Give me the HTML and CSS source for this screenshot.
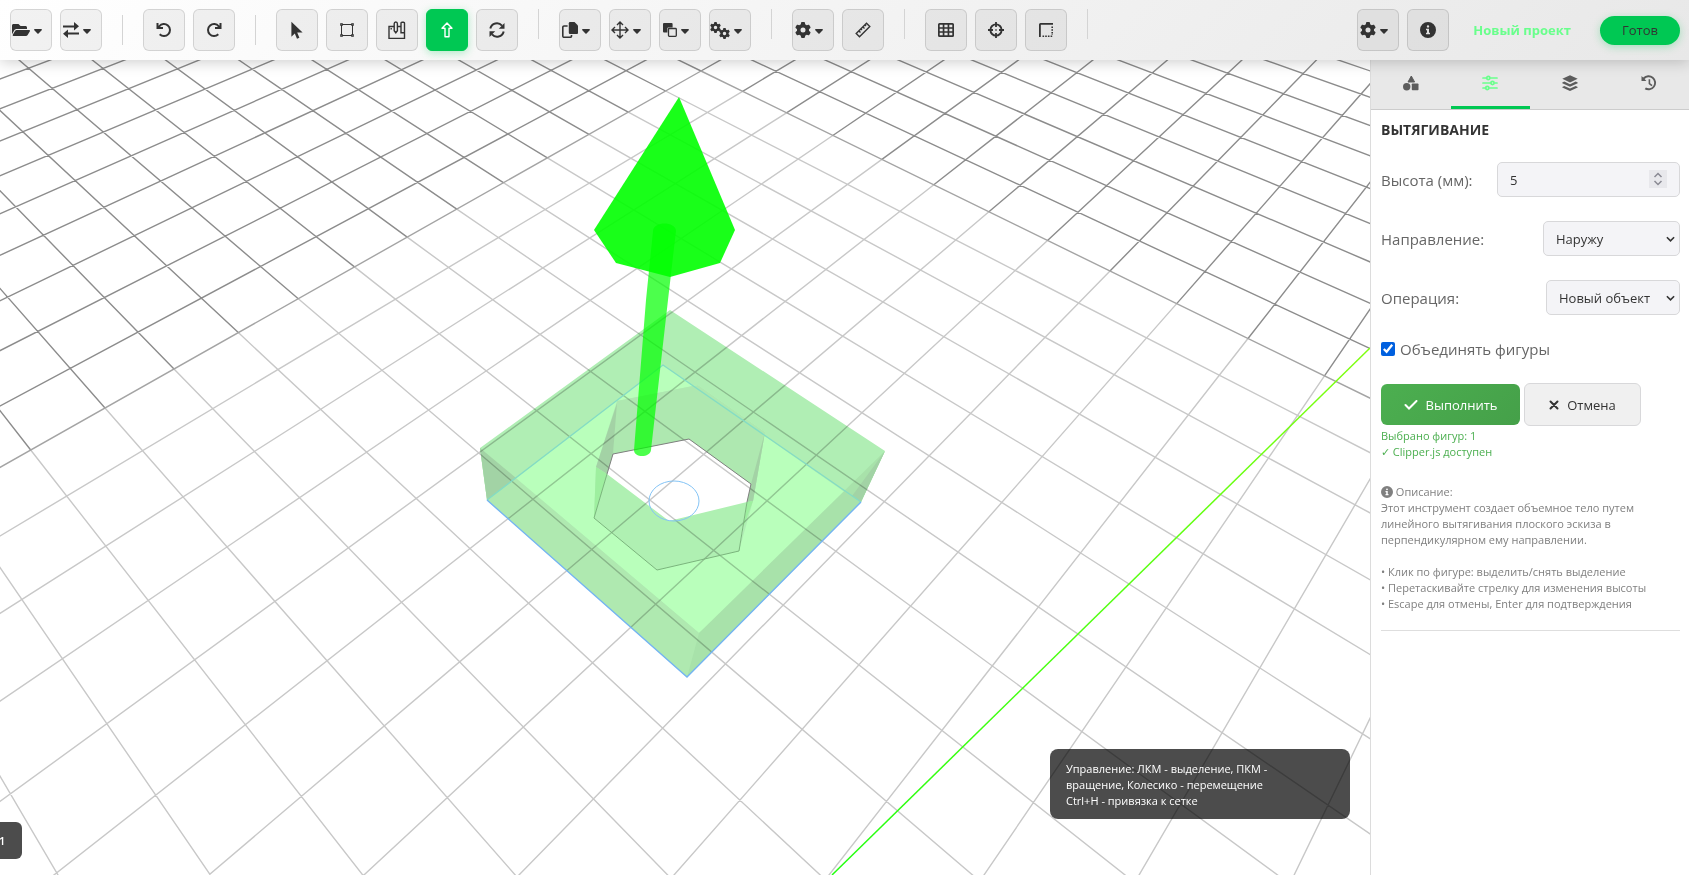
FILE: index.html
```html
<!DOCTYPE html>
<html lang="ru">
<head>
  <meta charset="UTF-8">
  <meta name="viewport" content="width=device-width, initial-scale=1.0">
  <title>Новый проект</title>
  <link rel="stylesheet" href="styles.css">
</head>
<body>
  <!-- Shared icons -->
  <svg class="sprite" aria-hidden="true">
    <symbol id="i-caret" viewBox="0 0 10 6"><path d="M1 0h8c.9 0 1.2.9.6 1.5l-3.900 4a1 1 0 0 1-1.400 0L.4 1.500C-.2.9.1 0 1 0z"/></symbol>
    <symbol id="i-gear" viewBox="0 0 512 512"><path d="M495.9 166.6c3.2 8.7 .5 18.4-6.4 24.6l-43.3 39.4c1.1 8.3 1.7 16.8 1.7 25.4s-.6 17.1-1.7 25.4l43.3 39.4c6.9 6.2 9.6 15.9 6.4 24.6c-4.4 11.9-9.7 23.3-15.8 34.3l-4.7 8.1c-6.6 11-14 21.4-22.1 31.2c-5.9 7.2-15.7 9.6-24.5 6.8l-55.7-17.7c-13.4 10.3-28.2 18.9-44 25.4l-12.5 57.1c-2 9.1-9 16.3-18.2 17.8c-13.8 2.3-28 3.5-42.5 3.5s-28.7-1.2-42.5-3.5c-9.2-1.5-16.2-8.7-18.2-17.8l-12.5-57.1c-15.8-6.5-30.6-15.1-44-25.4L83.1 425.9c-8.8 2.8-18.6 .3-24.5-6.8c-8.1-9.8-15.5-20.2-22.1-31.2l-4.7-8.1c-6.1-11-11.4-22.4-15.8-34.3c-3.2-8.7-.5-18.4 6.4-24.6l43.3-39.4C64.6 273.1 64 264.6 64 256s.6-17.1 1.7-25.4L22.4 191.2c-6.9-6.2-9.6-15.9-6.4-24.6c4.4-11.9 9.7-23.3 15.8-34.3l4.7-8.1c6.6-11 14-21.4 22.1-31.2c5.9-7.2 15.7-9.6 24.5-6.8l55.7 17.7c13.4-10.3 28.2-18.9 44-25.4l12.5-57.1c2-9.1 9-16.3 18.2-17.8C227.3 1.2 241.5 0 256 0s28.7 1.2 42.5 3.5c9.2 1.5 16.2 8.7 18.2 17.8l12.5 57.1c15.8 6.5 30.6 15.1 44 25.4l55.7-17.7c8.8-2.8 18.6-.3 24.5 6.8c8.1 9.8 15.5 20.2 22.1 31.2l4.7 8.1c6.1 11 11.4 22.4 15.8 34.3zM256 336a80 80 0 1 0 0-160 80 80 0 1 0 0 160z"/></symbol>
    <symbol id="i-info" viewBox="0 0 16 16"><path fill-rule="evenodd" d="M8 0a8 8 0 1 1 0 16A8 8 0 0 1 8 0zM8 3.2a1.2 1.2 0 1 0 0 2.4 1.2 1.2 0 0 0 0-2.4zM6 6.8v1.5h1v2.4H6v1.5h4v-1.5H9V6.8z"/></symbol>
    <symbol id="i-chevron" viewBox="0 0 10 6"><path d="M1 1l4 4 4-4" fill="none" stroke="currentColor" stroke-width="1.8"/></symbol>
  </svg>

  <!-- Toolbar -->
  <header class="toolbar">
    <div class="tools">
      <button class="tool drop" title="Файл">
        <svg width="18" height="16" viewBox="0 0 576 512"><path d="M572.7 292.1L500.3 416.2A64 64 0 0 1 445 448H45c-18.5 0-30-20.1-20.7-36.1l72.4-124.2A64 64 0 0 1 152 256h400c18.5 0 30 20.1 20.7 36.1zM152 224h328v-48c0-26.5-21.5-48-48-48H272l-64-64H48C21.5 64 0 85.5 0 112v278l69.1-118.4C86.2 242.3 118 224 152 224z"/></svg>
        <svg class="caret"><use href="#i-caret"/></svg>
      </button>
      <button class="tool drop" title="Импорт и экспорт">
        <svg width="16" height="16" viewBox="0 0 16 16"><path d="M0 3.400h11V0l5 4.300-5 4.200V5.400H0zM16 10.600H5V7.500L0 11.700 5 16v-3.400h11z"/></svg>
        <svg class="caret"><use href="#i-caret"/></svg>
      </button>
      <span class="separator centered"></span>
      <button class="tool" title="Отменить">
        <svg width="16" height="16" viewBox="0 0 16 16"><path d="M.5 1h2v2.700A7 7 0 1 1 3 13l1.400-1.500a5 5 0 1 0-.4-6.500H7v2H.5z"/></svg>
      </button>
      <button class="tool" title="Повторить">
        <svg width="16" height="16" viewBox="0 0 16 16"><path d="M15.500 1h-2v2.700A7 7 0 1 0 13 13l-1.400-1.500a5 5 0 1 1 .4-6.500H9v2h6.500z"/></svg>
      </button>
      <span class="separator centered"></span>
      <button class="tool" title="Выделение">
        <svg width="12" height="18" viewBox="0 0 12 18"><path d="M.4.8v15l3.400-3.300 2.200 5.200 2.400-1-2.200-5.100h5.400z"/></svg>
      </button>
      <button class="tool" title="Плоскость">
        <svg class="line" width="14" height="14" viewBox="0 0 14 14"><path d="M1.5 1.5h11v11h-11z"/><path stroke-width=".8" d="M.5.5h2v2h-2zM11.5.5h2v2h-2zM.5 11.5h2v2h-2zM11.5 11.5h2v2h-2z"/></svg>
      </button>
      <button class="tool" title="Эскиз">
        <svg class="line thick" width="18" height="18" viewBox="0 0 18 18"><path d="M6 5.500H1v12h15.500V2.200a1 1 0 0 0-1-1H14a1 1 0 0 0-1 1v9.500h3.300M9.500 5.500H13M7.800 1c-1 0-1.600.8-1.600 1.800v7l1.600 2 1.600-2v-7C9.400 1.800 8.800 1 7.800 1zM3.200 7v1.500"/></svg>
      </button>
      <button class="tool active" title="Вытягивание">
        <svg class="line thick" width="12" height="16" viewBox="0 0 12 16"><path d="M6 1L1 6.300h3v8.400h4V6.300h3z" stroke-linejoin="round"/></svg>
      </button>
      <button class="tool" title="Вращение">
        <svg width="16" height="16" viewBox="0 0 16 16"><path d="M1.300 6.500A6.800 6.800 0 0 1 13 3.600M14.700 9.500A6.800 6.800 0 0 1 3 12.400" fill="none" stroke="currentColor" stroke-width="2"/><path d="M15.500 1v5.700H9.800zM.5 15V9.300h5.700z"/></svg>
      </button>
      <span class="separator"></span>
      <button class="tool drop" title="Копировать">
        <svg width="16" height="16" viewBox="0 0 16 16"><path d="M8 0h4.500L16 3.500V11a1 1 0 0 1-1 1H8a1.200 1.200 0 0 1-1.200-1.200V1.200A1.200 1.200 0 0 1 8 0z"/><path d="M5.600 4H2a1.200 1.200 0 0 0-1.200 1.200v8.900A1.200 1.200 0 0 0 2 15.300h6.300a1.200 1.200 0 0 0 1.200-1.200v-1" fill="none" stroke="currentColor" stroke-width="1.600"/></svg>
        <svg class="caret"><use href="#i-caret"/></svg>
      </button>
      <button class="tool drop" title="Переместить">
        <svg class="line thick" width="18" height="18" viewBox="0 0 18 18"><path d="M9 1v16M1 9h16M6 4l3-3 3 3M6 14l3 3 3-3M4 6L1 9l3 3M14 6l3 3-3 3"/></svg>
        <svg class="caret"><use href="#i-caret"/></svg>
      </button>
      <button class="tool drop" title="Булевы операции">
        <svg width="14" height="14" viewBox="0 0 14 14"><path d="M1 0h7.600a1 1 0 0 1 1 1v3.400H5.200a.8.8 0 0 0-.8.8v4.400H1a1 1 0 0 1-1-1V1a1 1 0 0 1 1-1z"/><rect x="5.500" y="5.500" width="7.800" height="7.800" rx=".8" fill="none" stroke="currentColor" stroke-width="1.300"/></svg>
        <svg class="caret"><use href="#i-caret"/></svg>
      </button>
      <button class="tool drop" title="Операции">
        <svg width="20" height="18" viewBox="0 0 20 18"><use href="#i-gear" width="11" height="11" y="1"/><use href="#i-gear" x="9" y="7" width="11" height="11"/></svg>
        <svg class="caret"><use href="#i-caret"/></svg>
      </button>
      <span class="separator"></span>
      <button class="tool drop" title="Инструменты">
        <svg width="16" height="16"><use href="#i-gear"/></svg>
        <svg class="caret"><use href="#i-caret"/></svg>
      </button>
      <button class="tool" title="Линейка">
        <svg class="line thick" width="16" height="16" viewBox="0 0 16 16"><path d="M1.200 11.600L11.500 1.200l3.300 3.300L4.500 14.800zM4 9l1.500 1.500M6 7l1 1M8 5l1.500 1.500M10 3l1 1"/></svg>
      </button>
      <span class="separator"></span>
      <button class="tool" title="Сетка">
        <svg width="16" height="14" viewBox="0 0 16 14"><path fill-rule="evenodd" d="M1.500 0h13A1.500 1.500 0 0 1 16 1.500v11a1.500 1.500 0 0 1-1.500 1.500h-13A1.500 1.500 0 0 1 0 12.500v-11A1.500 1.500 0 0 1 1.500 0zM1.700 1.700v2.500h3V1.700zM6.400 1.700v2.500h3.200V1.700zM11.300 1.700v2.500h3V1.700zM1.700 5.700v2.600h3V5.700zM6.400 5.700v2.600h3.200V5.700zM11.300 5.700v2.600h3V5.700zM1.700 9.800v2.500h3V9.800zM6.400 9.800v2.500h3.200V9.800zM11.300 9.800v2.500h3V9.800z"/></svg>
      </button>
      <button class="tool" title="Привязка">
        <svg width="16" height="16" viewBox="0 0 16 16"><circle cx="8" cy="8" r="5.600" fill="none" stroke="currentColor" stroke-width="1.900"/><path d="M7.100 0h1.800v5H7.100zM7.100 11h1.800v5H7.100zM0 7.100h5v1.800H0zM11 7.100h5v1.800h-5zM7.300 7.300h1.400v1.400H7.300z"/></svg>
      </button>
      <button class="tool" title="Границы">
        <svg width="14" height="14" viewBox="0 0 14 14"><path d="M1.500 0H14v1.800H1.800V14H0V1.500A1.500 1.500 0 0 1 1.500 0z"/><path d="M3.500 13.200H14M13.200 3.500V12" fill="none" stroke="currentColor" stroke-width="1.600" stroke-dasharray="1.600 1.100"/></svg>
      </button>
      <span class="separator"></span>
    </div>
    <div class="status-area">
      <button class="tool drop" title="Настройки">
        <svg width="16" height="16"><use href="#i-gear"/></svg>
        <svg class="caret"><use href="#i-caret"/></svg>
      </button>
      <button class="tool" title="Справка">
        <svg width="16" height="16"><use href="#i-info"/></svg>
      </button>
      <span class="project-name">Новый проект</span>
      <span class="status">Готов</span>
    </div>
  </header>

  <div class="workspace">
    <!-- Viewport -->
    <main class="viewport">
      <svg class="scene" viewBox="0 60 1370 815" preserveAspectRatio="xMinYMin slice">
        <defs>
          <linearGradient id="axis-color" x1="0" y1="1" x2="1" y2="0">
            <stop offset="0" stop-color="#22ff10"/>
            <stop offset="1" stop-color="#80ff10"/>
          </linearGradient>
        </defs>
        <path id="grid-far" class="grid-far"/>
        <path id="grid-near" class="grid-near"/>
        <path id="grid-edge" class="grid-edge"/>
        <path class="axis" d="M832 875L1370 348"/>

        <!-- Extruded body -->
        <g class="body">
          <path fill="#b0eeb4" fill-rule="evenodd" d="M670 310L885 451 861 502 687 677 487 500 480 448zM613 454L689 439 751 484 739 551 657 570 594 518z"/>
          <path fill="#b9ffbb" fill-rule="evenodd" d="M663 365L853 498 699 633 516 478zM617 401L698 385 765 432 753 501 739 551 657 570 594 518 596 467z"/>
          <path fill="#afe9b0" d="M480 448L699 633 687 677 487 500z"/>
          <path fill="#a8e2aa" d="M885 451L861 502 687 677 699 633z"/>
          <path fill="#a2d3a5" d="M480 448L487 500 516 478zM885 451L861 502 852 496z"/>
          <path fill="#aee8b0" d="M617 401L698 385 765 432 753 501 751 484 689 439 613 454z"/>
          <path fill="#a3d2a5" d="M617 403L596 467 607 474 613 454zM765 432L753 501 747 502 751 484z"/>
          <path fill="#aff0b2" d="M607 474L669 521 747 502 739 551 657 570 594 518z"/>
          <path fill="#9eef9f" d="M596 467L607 474 594 518zM753 501L747 502 743 528z"/>
        </g>
        <path class="hole-edge" d="M607 474L613 454 689 439 751 484 747 502"/>
        <path class="hole-edge inner" d="M747 502L739 551 657 570 594 518 607 474"/>
        <path class="base-edge back" d="M487 500L663 365 861 502"/>
        <path class="base-edge" d="M487 500L687 677 861 502"/>
        <ellipse class="sketch" cx="674" cy="501" rx="25" ry="20"/>

        <!-- Height arrow -->
        <path class="arrow-shaft" d="M653 231C653 221 676 221 676 231L668 300 651 450C650 458 634 458 634 450L646 300z"/>
        <path class="arrow-head" d="M679 97L735 230 720 263 670 277 616 263 594 230z"/>
      </svg>
      <div class="coords">1</div>
      <div class="hint">Управление: ЛКМ - выделение, ПКМ - вращение, Колесико - перемещение<br>Ctrl+H - привязка к сетке</div>
    </main>

    <!-- Side panel -->
    <aside class="panel">
      <nav class="tabs">
        <button class="tab" title="Фигуры">
          <svg width="16" height="16" viewBox="0 0 16 16"><path d="M8.300 1L11.600 7H5z" stroke="currentColor" stroke-linejoin="round"/><circle cx="3.700" cy="11.800" r="3.700"/><rect x="8.800" y="8.500" width="6.700" height="6.700" rx=".8"/></svg>
        </button>
        <button class="tab active" title="Свойства">
          <svg width="16" height="16" viewBox="0 0 16 16" fill="none" stroke="currentColor" stroke-width="1.700"><path d="M1 3h3.500M8.500 3H15M1 8h8M13 8h2M1 13h2.500M7.500 13H15" stroke-linecap="round"/><circle class="line" cx="6.300" cy="3" r="1.600"/><circle class="line" cx="10.500" cy="8" r="1.600"/><circle class="line" cx="5.300" cy="13" r="1.600"/></svg>
        </button>
        <button class="tab" title="Слои">
          <svg width="16" height="16" viewBox="0 0 16 16"><path d="M8 .3l7.700 3.500L8 7.400.3 3.800zM2.300 6.600L8 9.200l5.700-2.600L15.700 7.600v.7L8 11.800.3 8.300v-.7zM2.300 10.900L8 13.500l5.700-2.600 2 1v.6L8 16 .3 12.500v-.6z"/></svg>
        </button>
        <button class="tab" title="История">
          <svg width="16" height="16" viewBox="0 0 16 16"><path d="M.5 1l1.600 1.600A7.500 7.500 0 1 1 3.700 14.200l1.200-1.600A5.500 5.500 0 1 0 3.600 4.100L5.400 6H.5zM7.600 4.300h1.600v3.900l2.300 1.800-1 1.200-2.900-2.300z"/></svg>
        </button>
      </nav>

      <div class="properties">
        <h2>Вытягивание</h2>
        <div class="field">
          <label for="height">Высота (мм):</label>
          <div class="control number">
            <input type="number" id="height" value="5">
            <svg class="stepper" viewBox="0 0 18 18"><path d="M5.500 7L9 3.500 12.500 7M5.500 11L9 14.500l3.500-3.500"/></svg>
          </div>
        </div>
        <div class="field">
          <label for="direction">Направление:</label>
          <div class="control direction">
            <select id="direction"><option>Наружу</option><option>Внутрь</option></select>
            <svg class="chevron"><use href="#i-chevron"/></svg>
          </div>
        </div>
        <div class="field">
          <label for="operation">Операция:</label>
          <div class="control operation">
            <select id="operation"><option>Новый объект</option><option>Вырезать</option></select>
            <svg class="chevron"><use href="#i-chevron"/></svg>
          </div>
        </div>
        <div class="check">
          <input type="checkbox" id="merge" checked>
          <label for="merge">Объединять фигуры</label>
        </div>
        <div class="actions">
          <button class="btn primary">
            <svg width="14" height="10" viewBox="0 0 14 10"><path d="M1.500 5L5 8.500 12.500 1" fill="none" stroke="currentColor" stroke-width="2" stroke-linecap="round"/></svg>
            Выполнить
          </button>
          <button class="btn secondary">
            <svg width="10" height="10" viewBox="0 0 10 10"><path d="M1.500 1.500l7 7M8.500 1.500l-7 7" stroke="currentColor" stroke-width="2" stroke-linecap="round"/></svg>
            Отмена
          </button>
        </div>
        <div class="result">Выбрано фигур: 1<br>✓ Clipper.js доступен</div>
        <div class="description">
          <svg width="12" height="12"><use href="#i-info"/></svg> Описание:<br>
          Этот инструмент создает объемное тело путем линейного вытягивания плоского эскиза в перпендикулярном ему направлении.<br><br>
          • Клик по фигуре: выделить/снять выделение<br>
          • Перетаскивайте стрелку для изменения высоты<br>
          • Escape для отмены, Enter для подтверждения
        </div>
      </div>
    </aside>
  </div>

  <script src="scene.js"></script>
</body>
</html>
```
FILE: scene.js
```js
// Ground plane projection, (u, v) are grid cells
const NEAR_U = 15;
const NEAR_V = 5;
const BACK = -30;
const FAR = 50;

// screen corners of the 12 x 8 cell patch that starts at cell (3, -3)
const corners = [[517, 877], [1110, 271], [701, 71], [105, 408]];

function squareToQuad([p0, p1, p2, p3]) {
  const dx1 = p1[0] - p2[0], dx2 = p3[0] - p2[0];
  const dy1 = p1[1] - p2[1], dy2 = p3[1] - p2[1];
  const sx = p0[0] - p1[0] + p2[0] - p3[0];
  const sy = p0[1] - p1[1] + p2[1] - p3[1];
  const det = dx1 * dy2 - dx2 * dy1;
  const g = (sx * dy2 - dx2 * sy) / det;
  const h = (dx1 * sy - sx * dy1) / det;
  return {
    a: p1[0] - p0[0] + g * p1[0], b: p3[0] - p0[0] + h * p3[0], c: p0[0],
    d: p1[1] - p0[1] + g * p1[1], e: p3[1] - p0[1] + h * p3[1], f: p0[1],
    g, h
  };
}

const m = squareToQuad(corners);

function depth(u, v) {
  return 1 + m.g * (u - 3) / 12 + m.h * (v + 3) / 8;
}

function project(u, v) {
  const s = (u - 3) / 12, t = (v + 3) / 8, w = depth(u, v);
  const x = (m.a * s + m.b * t + m.c) / w;
  const y = (m.d * s + m.e * t + m.f) / w;
  return x.toFixed(1) + ' ' + y.toFixed(1);
}

// move the start forward until it is in front of the camera
function segment(point, from, to) {
  while (from < to && depth(...point(from)) < 0.2) from += 0.5;
  if (from >= to) return '';
  return 'M' + project(...point(from)) + 'L' + project(...point(to));
}

let near = '';
let far = '';
let edge = '';

function addLine(point, index, limit, end) {
  if (index > limit) {
    far += segment(point, BACK, FAR);
    return;
  }
  if (index === limit) {
    edge += segment(point, BACK, end);
  } else {
    near += segment(point, BACK, end);
  }
  far += segment(point, end, FAR);
}

for (let i = -20; i <= FAR; i++) {
  addLine(t => [i, t], i, NEAR_U, NEAR_V);
  addLine(t => [t, i], i, NEAR_V, NEAR_U);
}

document.getElementById('grid-near').setAttribute('d', near);
document.getElementById('grid-far').setAttribute('d', far);
document.getElementById('grid-edge').setAttribute('d', edge);
```
FILE: styles.css
```css
/* =====================
   Variables
   ===================== */
:root {
  --accent: #00c853;
  --accent-light: #69ff8c;
  --text: #333;
  --muted: #666;
  --border: #d8d8da;
  --field-bg: #f4f4f7;
}

* {
  box-sizing: border-box;
}

body {
  margin: 0;
  height: 100vh;
  display: flex;
  flex-direction: column;
  overflow: hidden;
  font-family: "Open Sans", "Noto Sans", sans-serif;
  font-size: 13px;
  color: var(--text);
  background: #fff;
}

button,
input,
select {
  font: inherit;
  color: inherit;
}

svg {
  fill: currentColor;
  flex: none;
}

.sprite {
  display: none;
}

/* =====================
   Toolbar
   ===================== */
.toolbar {
  position: relative;
  z-index: 2;
  height: 60px;
  padding: 0 9px 0 10px;
  display: flex;
  align-items: center;
  justify-content: space-between;
  background: linear-gradient(135deg, #fff, #e8e8e8);
  box-shadow: 0 2px 14px rgba(0, 0, 0, 0.2);
}

.tools,
.status-area {
  display: flex;
  gap: 8px;
}

.status-area {
  align-items: center;
}

.tool {
  width: 42px;
  height: 42px;
  padding: 0;
  display: flex;
  align-items: center;
  justify-content: center;
  gap: 4px;
  border: 1px solid rgba(0, 0, 0, 0.12);
  border-radius: 6px;
  background: rgba(0, 0, 0, 0.05);
}

.tool.drop {
  padding-right: 8px;
}

.tool.active {
  color: #fff;
  border-color: var(--accent);
  background: var(--accent);
  box-shadow: 0 2px 8px rgba(0, 200, 83, 0.3);
}

.caret {
  width: 8px;
  height: 5px;
  margin-top: 2px;
}

.line {
  fill: none;
  stroke: currentColor;
}

.thick {
  stroke-width: 1.4;
}

.separator {
  width: 1px;
  height: 30px;
  margin: 0 12px;
  background: #d4d4d4;
}

.separator.centered {
  align-self: center;
}

.project-name {
  margin: 0 21px 0 16px;
  font-weight: 700;
  color: var(--accent-light);
}

.status {
  width: 80px;
  line-height: 29px;
  text-align: center;
  border-radius: 15px;
  background: var(--accent);
  box-shadow: 0 2px 8px rgba(0, 200, 83, 0.3);
}

/* =====================
   Viewport
   ===================== */
.workspace {
  flex: 1;
  min-height: 0;
  display: flex;
}

.viewport {
  position: relative;
  flex: 1;
  overflow: hidden;
}

.scene {
  display: block;
  width: 100%;
  height: 100%;
  fill: none;
}

.grid-near,
.grid-far,
.grid-edge {
  stroke-width: 1.4;
}

.grid-near {
  stroke: #c8c8c8;
}

.grid-far {
  stroke: #8c8c8c;
}

.grid-edge {
  stroke: #a4a4a4;
}

.axis {
  stroke: url(#axis-color);
  stroke-width: 1.5;
}

.body {
  mix-blend-mode: multiply;
}

.hole-edge {
  stroke: #808080;
}

.hole-edge.inner {
  stroke: #7ab57c;
}

.base-edge {
  stroke: #74b4f2;
  stroke-width: 1.4;
}

.base-edge.back {
  stroke: #84dcc4;
}

.sketch {
  stroke: #84c4f6;
}

.arrow-shaft {
  fill: rgba(0, 255, 0, 0.7);
}

.arrow-head {
  fill: rgba(0, 255, 0, 0.9);
}

.coords,
.hint {
  position: absolute;
  color: #fff;
  background: rgba(0, 0, 0, 0.7);
  font-size: 11px;
  line-height: 16px;
}

.coords {
  left: -10px;
  bottom: 16px;
  width: 32px;
  padding: 11px 0 10px 9px;
  border-radius: 6px;
  font-weight: 600;
}

.hint {
  right: 20px;
  bottom: 56px;
  width: 300px;
  padding: 12px 32px 10px 16px;
  border-radius: 8px;
}

/* =====================
   Side panel
   ===================== */
.panel {
  width: 319px;
  border-left: 1px solid #dcdcdc;
  background: #fff;
}

.tabs {
  display: flex;
  height: 50px;
  background: #e8e8e8;
  border-bottom: 1px solid #ccc;
}

.tab {
  flex: 1;
  display: flex;
  align-items: center;
  justify-content: center;
  padding: 0 0 4px;
  border: none;
  border-top: 3px solid transparent;
  border-bottom: 3px solid transparent;
  background: none;
  color: #5c5c5c;
}

.tab.active {
  color: var(--accent-light);
  border-bottom-color: var(--accent);
}

.properties {
  margin: 0 9px 0 10px;
  padding-bottom: 18px;
  border-bottom: 1px solid #dedede;
}

h2 {
  margin: 10px 0 22px;
  font-size: 14px;
  line-height: 20px;
  text-transform: uppercase;
}

.field {
  display: flex;
  align-items: center;
  justify-content: space-between;
  margin-bottom: 24px;
}

.field label,
.check label {
  font-size: 15px;
  line-height: 20px;
  color: var(--muted);
}

.control {
  position: relative;
}

.control input,
.control select {
  display: block;
  width: 100%;
  height: 35px;
  padding: 0 12px;
  border: 1px solid var(--border);
  border-radius: 5px;
  background: var(--field-bg);
  appearance: none;
}

.number {
  width: 183px;
}

.number input {
  appearance: textfield;
}

.direction {
  width: 137px;
}

.operation {
  width: 134px;
}

.stepper {
  position: absolute;
  right: 13px;
  top: 8px;
  width: 18px;
  height: 18px;
  background: #e8e8ec;
  fill: none;
  stroke: #8a8a94;
  stroke-width: 1.5;
}

.chevron {
  position: absolute;
  right: 5px;
  top: 15px;
  width: 9px;
  height: 6px;
}

.check {
  display: flex;
  align-items: center;
  gap: 5px;
  height: 20px;
}

.check input {
  width: 14px;
  height: 14px;
  margin: 0;
  accent-color: #0060df;
}

.actions {
  display: flex;
  align-items: center;
  gap: 4px;
  margin-top: 24px;
}

.btn {
  display: flex;
  align-items: center;
  justify-content: center;
  gap: 8px;
  padding: 0;
  border: none;
  border-radius: 6px;
}

.btn.primary {
  width: 139px;
  height: 41px;
  color: #fff;
  background: linear-gradient(135deg, #4caf50, #45a049);
}

.btn.secondary {
  width: 117px;
  height: 43px;
  border: 1px solid var(--border);
  background: #f0f0f0;
}

.result,
.description {
  font-size: 11px;
  line-height: 16px;
}

.result {
  margin-top: 2px;
  color: #4caf50;
}

.description {
  margin-top: 24px;
  color: #808080;
}

.description svg {
  vertical-align: -2px;
}
```
